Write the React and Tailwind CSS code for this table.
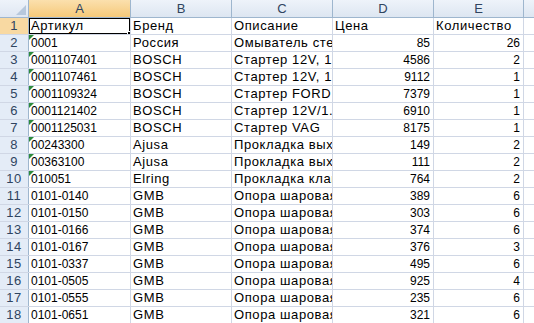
const cols = [
  { key: "A", w: "w-[102px]" },
  { key: "B", w: "w-[101px]" },
  { key: "C", w: "w-[101px]" },
  { key: "D", w: "w-[101px]" },
  { key: "E", w: "w-[90px]" },
];

const rows = [
  ["Артикул", "Бренд", "Описание", "Цена", "Количество"],
  ["0001", "Россия", "Омыватель стекла", "85", "26"],
  ["0001107401", "BOSCH", "Стартер 12V, 1.4kW", "4586", "2"],
  ["0001107461", "BOSCH", "Стартер 12V, 1.7kW", "9112", "1"],
  ["0001109324", "BOSCH", "Стартер FORD 12V", "7379", "1"],
  ["0001121402", "BOSCH", "Стартер 12V/1.1kW", "6910", "1"],
  ["0001125031", "BOSCH", "Стартер VAG", "8175", "1"],
  ["00243300", "Ajusa", "Прокладка выхлопной", "149", "2"],
  ["00363100", "Ajusa", "Прокладка выхлопной", "111", "2"],
  ["010051", "Elring", "Прокладка клапанной", "764", "2"],
  ["0101-0140", "GMB", "Опора шаровая", "389", "6"],
  ["0101-0150", "GMB", "Опора шаровая", "303", "6"],
  ["0101-0166", "GMB", "Опора шаровая", "374", "6"],
  ["0101-0167", "GMB", "Опора шаровая", "376", "3"],
  ["0101-0337", "GMB", "Опора шаровая", "495", "6"],
  ["0101-0505", "GMB", "Опора шаровая", "925", "4"],
  ["0101-0555", "GMB", "Опора шаровая", "235", "6"],
  ["0101-0651", "GMB", "Опора шаровая", "321", "6"],
];

// letters in this sheet render wider than the digits do
const hasLetters = (v) => /[A-Za-zА-Яа-яЁё]/.test(v);

function Cell({ value, col, row }) {
  const numeric = row > 0 && (col === 3 || col === 4);
  const flagged = col === 0 && row >= 1 && row <= 9;
  const selected = col === 0 && row === 0;
  return (
    <div
      className={`${cols[col].w} shrink-0 relative h-full border-r border-[#d0d7e5] flex items-center overflow-hidden whitespace-nowrap px-[2px] ${
        numeric ? "justify-end pr-[3px]" : ""
      }`}
    >
      {flagged && (
        <div className="absolute left-0 top-0 w-0 h-0 border-t-[5px] border-r-[5px] border-t-[#2c8a3c] border-r-transparent" />
      )}
      <span className={hasLetters(value) ? "text-[13px] tracking-[0.6px]" : ""}>{value}</span>
      {selected && (
        <div className="absolute -left-[1px] -top-[1px] right-[-1px] bottom-[-1px] border-2 border-black">
          <div className="absolute -right-[4px] -bottom-[4px] w-[6px] h-[6px] bg-black border border-white" />
        </div>
      )}
    </div>
  );
}

export default function App() {
  return (
    <div
      className="w-[534px] h-[323px] overflow-hidden bg-white text-[12px] text-black"
      style={{ fontFamily: '"Liberation Sans", Arial, sans-serif' }}
    >
      <div className="flex h-[18px] border-b border-[#9eb6ce] text-[#2f4460] text-[13px]">
        <div className="w-[29px] shrink-0 relative border-r border-[#9eb6ce] bg-gradient-to-b from-[#eef3fa] to-[#dfe7f2]">
          <div className="absolute right-[2px] bottom-[2px] w-0 h-0 border-b-[10px] border-l-[10px] border-b-[#b7c8dc] border-l-transparent" />
        </div>
        {cols.map((c, i) => (
          <div
            key={c.key}
            className={`${c.w} shrink-0 border-r border-[#9eb6ce] flex items-center justify-center ${
              i === 0
                ? "bg-gradient-to-b from-[#fbe0ad] to-[#f5c979]"
                : "bg-gradient-to-b from-[#eef3fa] to-[#dde6f1]"
            }`}
          >
            {c.key}
          </div>
        ))}
        <div className="flex-1 bg-gradient-to-b from-[#eef3fa] to-[#dde6f1]" />
      </div>
      {rows.map((r, ri) => (
        <div key={ri} className="flex h-[17px] border-b border-[#d0d7e5]">
          <div
            className={`w-[29px] shrink-0 border-r border-[#9eb6ce] flex items-center justify-center text-[13px] tracking-[0.4px] text-[#2f4460] ${
              ri === 0 ? "bg-[#f8d9a2]" : "bg-[#e4ecf7]"
            }`}
          >
            {ri + 1}
          </div>
          {r.map((v, ci) => (
            <Cell key={ci} value={v} col={ci} row={ri} />
          ))}
          <div className="flex-1" />
        </div>
      ))}
    </div>
  );
}
